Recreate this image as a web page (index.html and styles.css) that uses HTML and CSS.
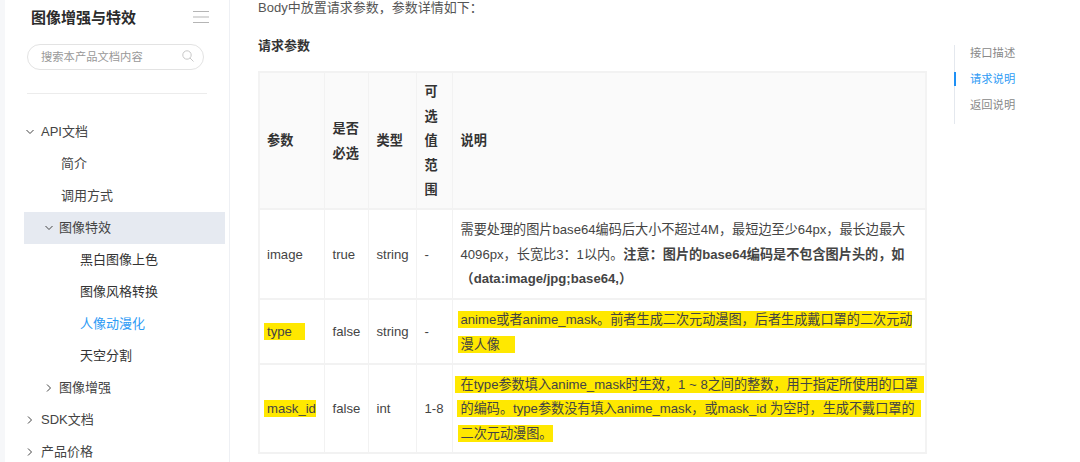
FILE: index.html
```html
<!DOCTYPE html>
<html lang="zh-CN">
<head>
<meta charset="utf-8">
<title>图像增强与特效</title>
<link rel="stylesheet" href="styles.css">
</head>
<body>
<div class="page">
  <aside class="sidebar">
    <div class="side-head">
      <h2 class="side-title">图像增强与特效</h2>
      <svg class="menu-icon" width="16" height="12" viewBox="0 0 16 12"><path d="M0 .5h16M0 6h16M0 11.500h16" stroke="#b5b5b5" stroke-width="1" fill="none"/></svg>
    </div>
    <div class="search">
      <span class="search-text">搜索本产品文档内容</span>
      <svg class="search-icon" width="12" height="12" viewBox="0 0 12 12"><circle cx="5" cy="5" r="4.200" stroke="#c8c8c8" fill="none"/><path d="M8 8l3.500 3.500" stroke="#c8c8c8" fill="none"/></svg>
    </div>
    <div class="side-divider"></div>
    <nav class="tree">
      <a class="item l1"><svg class="chev" width="8" height="8" viewBox="0 0 8 8"><path d="M.5 2l3.500 3.500L7.500 2" stroke="#444" fill="none"/></svg>API文档</a>
      <a class="item l1-leaf">简介</a>
      <a class="item l1-leaf">调用方式</a>
      <a class="item l2 current"><svg class="chev" width="8" height="8" viewBox="0 0 8 8"><path d="M.5 2l3.500 3.500L7.500 2" stroke="#444" fill="none"/></svg>图像特效</a>
      <a class="item l3">黑白图像上色</a>
      <a class="item l3">图像风格转换</a>
      <a class="item l3 active">人像动漫化</a>
      <a class="item l3">天空分割</a>
      <a class="item l2"><svg class="chev" width="8" height="8" viewBox="0 0 8 8"><path d="M2 .5l3.500 3.500L2 7.500" stroke="#444" fill="none"/></svg>图像增强</a>
      <a class="item l1"><svg class="chev" width="8" height="8" viewBox="0 0 8 8"><path d="M2 .5l3.500 3.500L2 7.500" stroke="#444" fill="none"/></svg>SDK文档</a>
      <a class="item l1"><svg class="chev" width="8" height="8" viewBox="0 0 8 8"><path d="M2 .5l3.500 3.500L2 7.500" stroke="#444" fill="none"/></svg>产品价格</a>
    </nav>
  </aside>
  <main class="content">
    <article class="doc">
      <p class="intro">Body中放置请求参数，参数详情如下：</p>
      <h4 class="section">请求参数</h4>
      <table class="params">
        <colgroup>
          <col class="c1"><col class="c2"><col class="c3"><col class="c4"><col class="c5">
        </colgroup>
        <thead>
          <tr class="r-head">
            <th>参数</th>
            <th>是否必选</th>
            <th>类型</th>
            <th>可选值范围</th>
            <th>说明</th>
          </tr>
        </thead>
        <tbody>
          <tr class="r-image">
            <td>image</td>
            <td>true</td>
            <td>string</td>
            <td>-</td>
            <td>需要处理的图片base64编码后大小不超过4M，最短边至少64px，最长边最大<br>4096px，长宽比3：1以内。<b>注意：图片的base64编码是不包含图片头的，如<br>（data:image/jpg;base64,）</b></td>
          </tr>
          <tr class="r-type">
            <td><span class="hl hl-cell hl-type">type</span></td>
            <td>false</td>
            <td>string</td>
            <td>-</td>
            <td><span class="hl">anime或者anime_mask。前者生成二次元动漫图，后者生成戴口罩的二次元动</span><br><span class="hl">漫人像&nbsp;&nbsp;&nbsp;&nbsp;</span></td>
          </tr>
          <tr class="r-mask">
            <td><span class="hl hl-cell">mask_id</span></td>
            <td>false</td>
            <td>int</td>
            <td class="center">1-8</td>
            <td><span class="hl hl-wide">在type参数填入anime_mask时生效，1 ~ 8之间的整数，用于指定所使用的口罩</span><br><span class="hl hl-mid">的编码。type参数没有填入anime_mask，或mask_id 为空时，生成不戴口罩的</span><br><span class="hl">二次元动漫图。</span></td>
          </tr>
        </tbody>
      </table>
    </article>
    <nav class="toc">
      <a class="toc-item">接口描述</a>
      <a class="toc-item on">请求说明</a>
      <a class="toc-item">返回说明</a>
    </nav>
  </main>
</div>
</body>
</html>
```
FILE: styles.css
```css
* { box-sizing: border-box; }
html, body { margin: 0; padding: 0; height: 462px; overflow: hidden; background: #fff; }
body {
  font-family: "Liberation Sans", "Noto Sans CJK SC", sans-serif;
  font-size: 13px;
  color: #333;
}
.page { display: flex; height: 462px; overflow: hidden; background: #f6f7f9; padding-left: 5px; }

.sidebar { width: 225px; flex: none; background: #fff; border-right: 1px solid #eef0f4; padding: 0 0 0 19px; }
.side-head { display: flex; align-items: center; justify-content: space-between; height: 36px; padding: 0 20px 0 7px; width: 205px; }
.side-title { margin: 0; font-size: 15px; font-weight: 700; color: #2b2b2b; line-height: 36px; }
.menu-icon { position: relative; top: -1px; }
.search { margin: 8px 0 0 3px; width: 177px; height: 26px; border: 1px solid #e3e3e3; border-radius: 13px; display: flex; align-items: center; justify-content: space-between; padding: 0 9px 2px 13px; }
.search-text { font-size: 11.300px; color: #999; }
.side-divider { margin: 23px 0 0 3px; width: 180px; height: 1px; background: #ececec; }
.tree { display: flex; flex-direction: column; margin-top: 22px; width: 201px; }
.item { display: flex; align-items: center; height: 32px; color: #444; line-height: 32px; white-space: nowrap; }
.chev { flex: none; }
.l1 { padding-left: 2px; }
.l1 .chev { margin-right: 7px; }
.l1-leaf { padding-left: 37px; }
.l2 { padding-left: 21px; }
.l2 .chev { margin-right: 6px; }
.l3 { padding-left: 56px; color: #333; }
.current { background: #e6eaf1; }
.active { color: #2e9bf5; }

.content { flex: 1; display: flex; background: #fff; padding-left: 28px; }
.doc { width: 668px; flex: none; }
.intro { margin: 0; padding-top: 1px; line-height: 14px; color: #555; }
.section { margin: 21px 0 0; font-size: 13px; line-height: 20px; color: #333; font-weight: 700; }
.params { margin-top: 15px; width: 668px; table-layout: fixed; border-collapse: collapse; border: 2px solid #f3f3f3; line-height: 24.500px; font-size: 13.150px; }
.c1 { width: 65px; }
.c2 { width: 44px; }
.c3 { width: 48px; }
.c4 { width: 36px; }
.c5 { width: 474px; }
.params th, .params td { border: 1px solid #f2f2f2; border-width: 2px 1.500px; padding: 2px 7px 0 8px; text-align: left; vertical-align: middle; }
.params th:first-child, .params td:first-child { padding-left: 7px; }
.params th { background: #fafafa; font-weight: 700; color: #333; }
.params td { color: #444; }
.params td.center { text-align: center; padding: 2px 0 0; }
.r-head { height: 137px; }
.r-image { height: 90px; }
.r-type { height: 65px; }
.r-mask { height: 89px; }
.hl { background: #ffe800; padding: 1px 0; margin-left: -3px; padding-left: 3px; white-space: nowrap; }
.hl-cell { margin-left: -3px; padding-left: 3px; }
.hl-type { padding-right: 13px; }
.hl-wide { margin-left: -6px; padding-left: 6px; padding-right: 6px; }
.hl-mid { margin-left: -4px; padding-left: 4px; padding-right: 6px; }

.toc { margin: 45px 0 0 28px; width: 100px; height: 79px; border-left: 1px solid #e4e8ee; display: flex; flex-direction: column; align-self: flex-start; }
.toc-item { display: block; flex: none; height: 26px; line-height: 26px; padding-left: 15px; font-size: 11.300px; color: #888; position: relative; white-space: nowrap; }
.toc-item:first-child { margin-top: -5px; }
.toc-item.on { color: #2e9bf5; }
.toc-item.on::before { content: ""; position: absolute; left: -1px; top: 6px; width: 2px; height: 14px; background: #1e90f5; }
```
